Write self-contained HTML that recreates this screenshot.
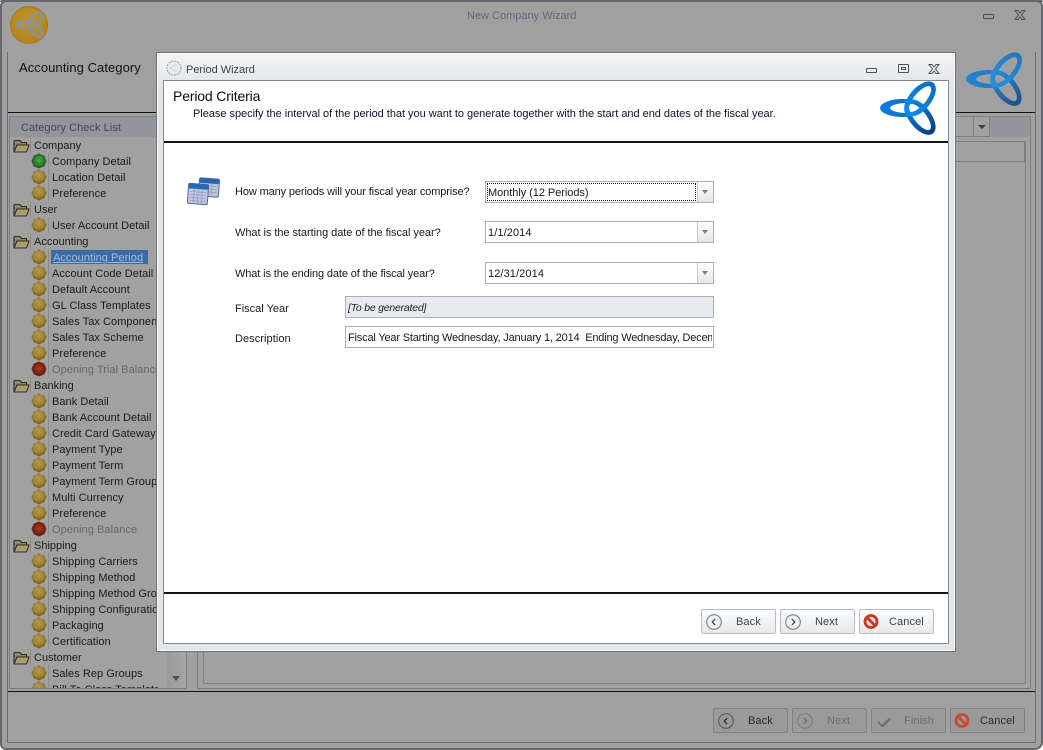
<!DOCTYPE html>
<html><head><meta charset="utf-8"><style>
html,body{margin:0;padding:0;width:1043px;height:750px;overflow:hidden;background:#fff}
*{box-sizing:border-box}
body{font-family:"Liberation Sans",sans-serif;font-size:11px;color:#17171f;position:relative}
.a,.t,.b,.i{position:absolute}
.i{overflow:visible}
.t{white-space:nowrap;line-height:14px;letter-spacing:-.1px;margin-top:1px}
.l{position:absolute;background:#676b6f}
.dot{position:absolute;left:31px;width:16px;height:16px}
.fo{position:absolute;left:13px;width:17px;height:14px}
.n{position:absolute;left:52px;white-space:nowrap;line-height:14px;letter-spacing:.05px;width:106px;overflow:hidden;color:#1a1a1a;margin-top:1px}
.p{position:absolute;left:34px;white-space:nowrap;line-height:14px;color:#1a1a1a;margin-top:1px}
.sep{position:absolute;width:1px;height:16px;background:#8c8c8c}
.d{color:#666}
.cb{position:absolute;left:485px;width:229px;height:22px;border:1px solid #abb0b8;background:#fff}
.cb .ar{position:absolute;right:0;top:0;width:16px;height:20px;border-left:1px solid #c5c8cd;background:linear-gradient(#fff,#e4e7ea)}
.cb .ar:after{content:"";position:absolute;left:4px;top:8px;border:3.5px solid transparent;border-top:4px solid #7a7d82;border-bottom:0}
.cb span{position:absolute;left:2px;top:4px;line-height:14px;white-space:nowrap;letter-spacing:-.05px}
.btn{position:absolute;width:75px;height:25px;border:1px solid #b9bdc2;border-radius:2px;background:linear-gradient(#fafbfc,#e6e9ec);color:#3f4349;text-align:center;line-height:25px}
.btn span{position:absolute;left:34px;top:0;letter-spacing:.1px;white-space:nowrap}
.btn svg{position:absolute;left:3px;top:3px}
.bg{border-color:#7f8184;background:#999a9b}
.bg span{color:#26282b}
.bg.off span{color:#6b6c6e}
</style></head><body>
<svg width="0" height="0" style="position:absolute"><defs>
<radialGradient id="go" cx=".45" cy=".32" r=".75"><stop offset="0" stop-color="#a89a6e"/><stop offset=".55" stop-color="#aa8422"/><stop offset="1" stop-color="#765816"/></radialGradient>
<radialGradient id="gg" cx=".5" cy=".45" r=".6"><stop offset="0" stop-color="#58ad52"/><stop offset="1" stop-color="#135d18"/></radialGradient>
<radialGradient id="gr" cx=".5" cy=".45" r=".6"><stop offset="0" stop-color="#ae3a20"/><stop offset="1" stop-color="#66120c"/></radialGradient>
<linearGradient id="lb" x1="0" y1="0" x2="0" y2="1"><stop offset="0" stop-color="#0a8df0"/><stop offset=".55" stop-color="#0b60b0"/><stop offset="1" stop-color="#043c84"/></linearGradient>
<linearGradient id="lu" x1="0" y1="0" x2="0" y2="1"><stop offset="0" stop-color="#0a6cc4"/><stop offset="1" stop-color="#0a90f0"/></linearGradient>
<linearGradient id="ll" x1="0" y1="0" x2="1" y2="0"><stop offset="0" stop-color="#0a7fe0"/><stop offset=".5" stop-color="#0a6fd0"/><stop offset="1" stop-color="#bfe0f8"/></linearGradient>
<g id="dO"><path d="M8 .5 L10.500 1.800 L13.300 2.700 L14.200 5.500 L15.500 8 L14.200 10.500 L13.300 13.300 L10.500 14.200 L8 15.500 L5.500 14.200 L2.700 13.300 L1.800 10.500 L.5 8 L1.800 5.500 L2.700 2.700 L5.500 1.800Z" fill="#6e5a2a"/><circle cx="8" cy="8" r="6.600" fill="url(#go)"/></g>
<g id="dG"><path d="M8 .5 L13.300 2.700 L15.500 8 L13.300 13.300 L8 15.500 L2.700 13.300 L.5 8 L2.700 2.700Z" fill="#2c4a2c"/><circle cx="8" cy="8" r="6.600" fill="url(#gg)"/></g>
<g id="dR"><path d="M8 .5 L13.300 2.700 L15.500 8 L13.300 13.300 L8 15.500 L2.700 13.300 L.5 8 L2.700 2.700Z" fill="#5a2a22"/><circle cx="8" cy="8" r="6.600" fill="url(#gr)"/></g>
<g id="fd"><path d="M1 13 V3 Q1 1.500 2.500 1.500 H7 L8.500 3.500 H13.500 V6" fill="#8f8566" stroke="#2e2a20" stroke-width="1.100"/><path d="M1 13 L4 6 H16 L13.500 13Z" fill="#aea06e" stroke="#2e2a20" stroke-width="1.100"/></g>
<g id="back"><circle cx="9" cy="9" r="7.300" fill="#eef0f2" stroke="#71757a"/><path d="M10.200 6 L7.200 9 L10.200 12" fill="none" stroke="#34383c" stroke-width="1.200"/></g>
<g id="next"><circle cx="9" cy="9" r="7.300" fill="#eef0f2" stroke="#71757a"/><path d="M7.800 6 L10.800 9 L7.800 12" fill="none" stroke="#34383c" stroke-width="1.200"/></g>
<g id="backd"><circle cx="9" cy="9" r="7.300" fill="none" stroke="#505458"/><path d="M10.200 6 L7.200 9 L10.200 12" fill="none" stroke="#202224" stroke-width="1.200"/></g>
<g id="nextd"><circle cx="9" cy="9" r="7.300" fill="none" stroke="#7a7c7e"/><path d="M7.800 6 L10.800 9 L7.800 12" fill="none" stroke="#66686a" stroke-width="1.200"/></g>
<g id="stop"><circle cx="8" cy="8.500" r="6" fill="none" stroke="#d8321a" stroke-width="2.800"/><path d="M3.800 4.300 L12.200 12.700" stroke="#d8321a" stroke-width="2.800"/></g>
<path id="lf" fill-rule="evenodd" d="M0 25a23 9 0 1 0 46 0a23 9 0 1 0-46 0ZM10 25a17 5 0 1 0 34 0a17 5 0 1 0-34 0Z"/>
<path id="rf" fill-rule="evenodd" d="M-11 0a11 21 0 1 0 22 0a11 21 0 1 0-22 0ZM-6 0a6 16 0 1 0 12 0a6 16 0 1 0-12 0Z"/>
<g id="logo"><use href="#lf" fill="url(#ll)"/><use href="#rf" transform="translate(40 34) rotate(-38)" fill="url(#lb)"/><use href="#rf" transform="translate(40 16) rotate(40)" fill="url(#lu)"/></g>
<g id="logog"><use href="#lf"/><use href="#rf" transform="translate(40 34) rotate(-38)"/><use href="#rf" transform="translate(40 16) rotate(40)"/></g>
</defs></svg>

<!-- main window -->
<div class="a" style="left:0;top:0;width:1043px;height:750px;background:#a0a0a0;border:2px solid #64686c;border-radius:6px 6px 8px 6px"></div>
<div class="a" style="left:0;top:0;width:1043px;height:2px;background:#64686c;border-radius:6px 6px 0 0"></div>
<div class="a" style="left:10px;top:6px;width:38px;height:38px;border-radius:50%;background:radial-gradient(circle at 50% 40%,#c09430,#b07e1a);border:1px solid #a87818"></div>
<svg class="i" style="left:15px;top:12px;color:#8694a2" width="28" height="26" viewBox="0 0 56 52"><use href="#logog" fill="#8694a2"/></svg>
<div class="t" style="left:467px;top:8px;color:#5c6a7c;letter-spacing:0">New Company Wizard</div>
<div class="a" style="left:983px;top:14px;width:11px;height:5px;border:1px solid #4c4f52;border-radius:1px"></div>
<svg class="i" style="left:1013px;top:9px" width="14" height="12" viewBox="0 0 14 12"><path d="M2 1.500 H5 L7 4 L9 1.500 H12 L8.500 6 L12 10.500 H9 L7 8 L5 10.500 H2 L5.500 6Z" fill="none" stroke="#4c4f52"/></svg>
<div class="l" style="left:7px;top:52px;width:1px;height:691px;background:#6b6d70"></div>
<div class="l" style="left:1035px;top:52px;width:1px;height:691px;background:#6b6d70"></div>
<div class="l" style="left:7px;top:742px;width:1029px;height:1px;background:#6b6d70"></div>
<div class="t" style="left:19px;top:59px;font-size:13px;line-height:15px;color:#111;letter-spacing:.06px">Accounting Category</div>
<div class="l" style="left:8px;top:112px;width:1027px;height:1px;background:#111"></div>
<div class="l" style="left:8px;top:691px;width:1027px;height:1px;background:#111"></div>
<svg class="i" style="left:966px;top:54px;opacity:.82" width="56" height="52" viewBox="0 0 56 52"><use href="#logo"/></svg>

<!-- left panel -->
<div class="a" style="left:9px;top:116px;width:178px;height:573px;border:1px solid #7c7e81;background:#a1a1a1"></div>
<div class="a" style="left:10px;top:117px;width:176px;height:20px;background:#94959a"></div>
<div class="t" style="left:21px;top:120px;color:#46484c;letter-spacing:.05px">Category Check List</div>
<div class="a" style="left:167px;top:137px;width:19px;height:551px;background:linear-gradient(90deg,#9a9a9a,#a6a6a6)"></div>
<div class="a" style="left:172px;top:676px;border:4px solid transparent;border-top:5px solid #4e4e4e;border-bottom:0"></div>

<div id="tree" class="a" style="left:0;top:0;width:167px;height:688px;overflow:hidden">
<svg class="fo" style="top:139px"><use href="#fd"/></svg><div class="sep" style="left:30px;top:137px"></div><div class="p" style="top:138px">Company</div>
<svg class="dot" style="top:153px"><use href="#dG"/></svg><div class="sep" style="left:48px;top:153px"></div><div class="n" style="top:154px">Company Detail</div>
<svg class="dot" style="top:169px"><use href="#dO"/></svg><div class="sep" style="left:48px;top:169px"></div><div class="n" style="top:170px">Location Detail</div>
<svg class="dot" style="top:185px"><use href="#dO"/></svg><div class="sep" style="left:48px;top:185px"></div><div class="n" style="top:186px">Preference</div>
<svg class="fo" style="top:203px"><use href="#fd"/></svg><div class="sep" style="left:30px;top:201px"></div><div class="p" style="top:202px">User</div>
<svg class="dot" style="top:217px"><use href="#dO"/></svg><div class="sep" style="left:48px;top:217px"></div><div class="n" style="top:218px">User Account Detail</div>
<svg class="fo" style="top:235px"><use href="#fd"/></svg><div class="sep" style="left:30px;top:233px"></div><div class="p" style="top:234px">Accounting</div>
<svg class="dot" style="top:249px"><use href="#dO"/></svg><div class="sep" style="left:48px;top:249px"></div>
<div class="a" style="left:51px;top:250px;width:97px;height:14px;background:#3a6ba8"></div><div class="n" style="top:250px;left:53px;width:92px;color:#a6bcd6;text-decoration:underline">Accounting Period</div>
<svg class="dot" style="top:265px"><use href="#dO"/></svg><div class="sep" style="left:48px;top:265px"></div><div class="n" style="top:266px">Account Code Detail</div>
<svg class="dot" style="top:281px"><use href="#dO"/></svg><div class="sep" style="left:48px;top:281px"></div><div class="n" style="top:282px">Default Account</div>
<svg class="dot" style="top:297px"><use href="#dO"/></svg><div class="sep" style="left:48px;top:297px"></div><div class="n" style="top:298px">GL Class Templates</div>
<svg class="dot" style="top:313px"><use href="#dO"/></svg><div class="sep" style="left:48px;top:313px"></div><div class="n" style="top:314px">Sales Tax Component</div>
<svg class="dot" style="top:329px"><use href="#dO"/></svg><div class="sep" style="left:48px;top:329px"></div><div class="n" style="top:330px">Sales Tax Scheme</div>
<svg class="dot" style="top:345px"><use href="#dO"/></svg><div class="sep" style="left:48px;top:345px"></div><div class="n" style="top:346px">Preference</div>
<svg class="dot" style="top:361px"><use href="#dR"/></svg><div class="sep" style="left:48px;top:361px"></div><div class="n d" style="top:362px">Opening Trial Balance</div>
<svg class="fo" style="top:379px"><use href="#fd"/></svg><div class="sep" style="left:30px;top:377px"></div><div class="p" style="top:378px">Banking</div>
<svg class="dot" style="top:393px"><use href="#dO"/></svg><div class="sep" style="left:48px;top:393px"></div><div class="n" style="top:394px">Bank Detail</div>
<svg class="dot" style="top:409px"><use href="#dO"/></svg><div class="sep" style="left:48px;top:409px"></div><div class="n" style="top:410px">Bank Account Detail</div>
<svg class="dot" style="top:425px"><use href="#dO"/></svg><div class="sep" style="left:48px;top:425px"></div><div class="n" style="top:426px">Credit Card Gateway</div>
<svg class="dot" style="top:441px"><use href="#dO"/></svg><div class="sep" style="left:48px;top:441px"></div><div class="n" style="top:442px">Payment Type</div>
<svg class="dot" style="top:457px"><use href="#dO"/></svg><div class="sep" style="left:48px;top:457px"></div><div class="n" style="top:458px">Payment Term</div>
<svg class="dot" style="top:473px"><use href="#dO"/></svg><div class="sep" style="left:48px;top:473px"></div><div class="n" style="top:474px">Payment Term Group</div>
<svg class="dot" style="top:489px"><use href="#dO"/></svg><div class="sep" style="left:48px;top:489px"></div><div class="n" style="top:490px">Multi Currency</div>
<svg class="dot" style="top:505px"><use href="#dO"/></svg><div class="sep" style="left:48px;top:505px"></div><div class="n" style="top:506px">Preference</div>
<svg class="dot" style="top:521px"><use href="#dR"/></svg><div class="sep" style="left:48px;top:521px"></div><div class="n d" style="top:522px">Opening Balance</div>
<svg class="fo" style="top:539px"><use href="#fd"/></svg><div class="sep" style="left:30px;top:537px"></div><div class="p" style="top:538px">Shipping</div>
<svg class="dot" style="top:553px"><use href="#dO"/></svg><div class="sep" style="left:48px;top:553px"></div><div class="n" style="top:554px">Shipping Carriers</div>
<svg class="dot" style="top:569px"><use href="#dO"/></svg><div class="sep" style="left:48px;top:569px"></div><div class="n" style="top:570px">Shipping Method</div>
<svg class="dot" style="top:585px"><use href="#dO"/></svg><div class="sep" style="left:48px;top:585px"></div><div class="n" style="top:586px">Shipping Method Group</div>
<svg class="dot" style="top:601px"><use href="#dO"/></svg><div class="sep" style="left:48px;top:601px"></div><div class="n" style="top:602px">Shipping Configuration</div>
<svg class="dot" style="top:617px"><use href="#dO"/></svg><div class="sep" style="left:48px;top:617px"></div><div class="n" style="top:618px">Packaging</div>
<svg class="dot" style="top:633px"><use href="#dO"/></svg><div class="sep" style="left:48px;top:633px"></div><div class="n" style="top:634px">Certification</div>
<svg class="fo" style="top:651px"><use href="#fd"/></svg><div class="sep" style="left:30px;top:649px"></div><div class="p" style="top:650px">Customer</div>
<svg class="dot" style="top:665px"><use href="#dO"/></svg><div class="sep" style="left:48px;top:665px"></div><div class="n" style="top:666px">Sales Rep Groups</div>
<svg class="dot" style="top:681px"><use href="#dO"/></svg><div class="sep" style="left:48px;top:681px"></div><div class="n" style="top:682px">Bill To Class Template</div>
</div>

<!-- right panel (behind dialog) -->
<div class="a" style="left:197px;top:116px;width:834px;height:573px;border:1px solid #7c7e81;background:#a1a1a1"></div>
<div class="a" style="left:955px;top:117px;width:75px;height:20px;background:#94959a"></div>
<div class="a" style="left:955px;top:116px;width:35px;height:21px;border:1px solid #7c7e81;border-left:0;background:#a1a1a1"></div>
<div class="a" style="left:973px;top:117px;width:1px;height:20px;background:#7c7e81"></div>
<div class="a" style="left:978px;top:125px;border:4px solid transparent;border-top:4px solid #3c3c3c;border-bottom:0"></div>
<div class="a" style="left:203px;top:141px;width:823px;height:543px;border:1px solid #7c7e81"></div>
<div class="a" style="left:204px;top:161px;width:821px;height:1px;background:#7c7e81"></div>
<div class="a" style="left:1024px;top:142px;width:2px;height:20px;background:#7c7e81"></div>

<!-- bottom main buttons -->
<div class="btn bg" style="left:713px;top:708px"><svg width="18" height="18"><use href="#backd"/></svg><span>Back</span></div>
<div class="btn bg off" style="left:792px;top:708px"><svg width="18" height="18"><use href="#nextd"/></svg><span>Next</span></div>
<div class="btn bg off" style="left:871px;top:708px"><svg width="18" height="18" viewBox="0 0 18 18"><path d="M3 9 L7 13 L15 5 L15.500 8 L7.500 15.500 L2.500 11Z" fill="#6c6e70"/></svg><span style="left:32px">Finish</span></div>
<div class="btn bg" style="left:950px;top:708px"><svg width="18" height="18"><g style="opacity:.8"><use href="#stop"/></g><circle cx="8" cy="8.500" r="3" fill="none"/></svg><span style="left:29px">Cancel</span></div>

<!-- dialog -->
<div class="a" style="left:156px;top:52px;width:800px;height:600px;border:1px solid #6f7478;background:linear-gradient(#f4f5f7,#e3e6e9 5%,#e3e6e9);box-shadow:inset 0 0 0 1px #f5f6f7"></div>
<svg class="i" style="left:166px;top:60px" width="16" height="16"><circle cx="8" cy="8" r="7" fill="#e6edf2" stroke="#8fa0ae" stroke-dasharray="2 1"/><path d="M4 8 L11 4 M4 8 L11 12" stroke="#bcd2e2"/></svg>
<div class="t" style="left:186px;top:62px;color:#3c4048;letter-spacing:-.02px">Period Wizard</div>
<div class="a" style="left:866px;top:68px;width:11px;height:5px;border:1px solid #4c4f52;border-radius:1px"></div>
<div class="a" style="left:898px;top:64px;width:11px;height:9px;border:1px solid #4c4f52;border-radius:1px"></div>
<div class="a" style="left:901px;top:67px;width:5px;height:3px;border:1px solid #4c4f52"></div>
<svg class="i" style="left:927px;top:63px" width="14" height="12" viewBox="0 0 14 12"><path d="M2 1.500 H5 L7 4 L9 1.500 H12 L8.500 6 L12 10.500 H9 L7 8 L5 10.500 H2 L5.500 6Z" fill="none" stroke="#4c4f52"/></svg>
<div class="a" style="left:163px;top:80px;width:786px;height:564px;border:1px solid #858a90;background:#fff"></div>
<div class="t" style="left:173px;top:88px;font-size:14px;line-height:15px;color:#0c0c0c;letter-spacing:-.15px">Period Criteria</div>
<div class="t" style="left:193px;top:106px;color:#16102c;letter-spacing:-.03px">Please specify the interval of the period that you want to generate together with the start and end dates of the fiscal year.</div>
<svg class="i" style="left:880px;top:83px" width="56" height="52" viewBox="0 0 56 52"><use href="#logo"/></svg>
<div class="l" style="left:164px;top:141px;width:784px;height:2px;background:#141414"></div>
<div class="l" style="left:164px;top:592px;width:784px;height:2px;background:#141414"></div>

<svg class="i" style="left:186px;top:176px" width="36" height="32" viewBox="0 0 36 32">
<g transform="rotate(4 23 11)"><rect x="13" y="2.500" width="20" height="18" rx="1.500" fill="#bcc6da" stroke="#5a6a88"/><rect x="13" y="2.500" width="20" height="5" rx="1.500" fill="#2468b4"/>
<path d="M15 10h16M15 13h16M15 16h16M18 8v11M22 8v11M26 8v11" stroke="#8a98b0" stroke-width=".7"/></g>
<g transform="rotate(4 12 18)"><rect x="2" y="8" width="20" height="20" rx="1.500" fill="#c0c6e4" stroke="#5e638c"/><rect x="2" y="8" width="20" height="5" rx="1.500" fill="#2468b4"/>
<path d="M4 16h16M4 19h16M4 22h16M4 25h16M8 13v14M12 13v14M16 13v14" stroke="#8f97c0" stroke-width=".7"/></g></svg>

<div class="t" style="left:235px;top:184px;letter-spacing:-.12px">How many periods will your fiscal year comprise?</div>
<div class="t" style="left:235px;top:225px;letter-spacing:-.05px">What is the starting date of the fiscal year?</div>
<div class="t" style="left:235px;top:266px;letter-spacing:-.12px">What is the ending date of the fiscal year?</div>
<div class="t" style="left:235px;top:301px;letter-spacing:0">Fiscal Year</div>
<div class="t" style="left:235px;top:331px;letter-spacing:.06px">Description</div>

<div class="cb" style="top:181px"><span>Monthly (12 Periods)</span><div class="ar"></div><div class="a" style="left:1px;top:1px;width:209px;height:18px;border:1px dotted #111"></div></div>
<div class="cb" style="top:221px"><span style="letter-spacing:.1px">1/1/2014</span><div class="ar"></div></div>
<div class="cb" style="top:262px"><span style="letter-spacing:.1px">12/31/2014</span><div class="ar"></div></div>

<div class="a" style="left:345px;top:296px;width:369px;height:22px;border:1px solid #abb0b8;background:#e7eaee"></div>
<div class="t" style="left:348px;top:300px;font-style:italic;font-size:10.500px;color:#222;letter-spacing:-.22px">[To be generated]</div>
<div class="a" style="left:345px;top:326px;width:369px;height:22px;border:1px solid #abb0b8;background:#fff"><div class="a" style="left:0;top:0;width:366px;height:20px;overflow:hidden"><div class="t" style="left:2px;top:3px;letter-spacing:-.18px">Fiscal Year Starting Wednesday, January 1, 2014&nbsp; Ending Wednesday, December 31, 2014</div></div></div>

<div class="btn" style="left:701px;top:609px"><svg width="18" height="18"><use href="#back"/></svg><span>Back</span></div>
<div class="btn" style="left:780px;top:609px"><svg width="18" height="18"><use href="#next"/></svg><span>Next</span></div>
<div class="btn" style="left:859px;top:609px"><svg width="18" height="18"><use href="#stop"/></svg><span style="left:29px">Cancel</span></div>
</body></html>
